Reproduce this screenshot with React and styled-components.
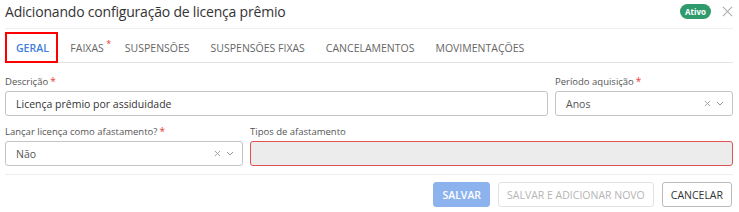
import React from "react";
import styled, { createGlobalStyle } from "styled-components";

const GlobalStyle = createGlobalStyle`
  body {
    margin: 0;
    font-family: "Open Sans", "Noto Sans", sans-serif;
    background: #fff;
    color: #333;
  }
`;

const Modal = styled.div`
  width: 739px;
  height: 212px;
  padding: 0 6px 0 5px;
  box-sizing: border-box;
`;

const Header = styled.div`
  height: 28px;
  display: flex;
  align-items: center;
  justify-content: space-between;
`;

const Title = styled.h1`
  margin: 0;
  font-size: 14px;
  font-weight: 400;
  color: #333;
  letter-spacing: -0.2px;
  padding-bottom: 5px;
`;

const HeaderRight = styled.div`
  display: flex;
  align-items: center;
  gap: 11px;
  padding-bottom: 5px;
`;

const Badge = styled.span`
  background: #2f9a6c;
  color: #fff;
  font-size: 8px;
  font-weight: 700;
  border-radius: 8px;
  padding: 2px 5px;
  line-height: 11px;
`;

const Close = styled.svg`
  width: 11px;
  height: 11px;
`;

const Tabs = styled.nav`
  display: flex;
  align-items: stretch;
  height: 35px;
  border-top: 1px solid #eee;
  border-bottom: 1px solid #e3e3e3;
  box-sizing: border-box;
  padding-top: 3px;
`;

const Tab = styled.div`
  position: relative;
  display: flex;
  align-items: center;
  padding: ${({ $active }) => ($active ? "1px 7px 0 9px" : "1px 10.5px 0")};
  margin-right: ${({ $active }) => ($active ? "2px" : "0")};
  margin-bottom: ${({ $active }) => ($active ? "-1px" : "0")};
  font-size: 10.5px;
  color: ${({ $active }) => ($active ? "#3d7fdb" : "#666")};
  font-weight: ${({ $active }) => ($active ? 600 : 400)};
  border: ${({ $active }) => ($active ? "2px solid #f00" : "none")};
  box-sizing: border-box;
  white-space: nowrap;
`;

const Req = styled.span`
  color: #e53935;
  font-size: 10px;
  margin-left: 2px;
`;

const TabReq = styled.span`
  position: absolute;
  right: 3px;
  top: 5px;
  color: #e53935;
  font-size: 9px;
`;

const Form = styled.div`
  display: grid;
  grid-template-columns: 1fr 178px;
  column-gap: 7px;
  padding-top: 11px;
`;

const Row2 = styled.div`
  display: grid;
  grid-template-columns: 238px 1fr;
  column-gap: 7px;
  padding-top: 8px;
`;

const Field = styled.div`
  display: flex;
  flex-direction: column;
`;

const Label = styled.label`
  font-size: 9.5px;
  color: #555;
  height: 17px;
  line-height: 15px;
`;

const Box = styled.div`
  height: 25px;
  box-sizing: border-box;
  border: 1px solid ${({ $error }) => ($error ? "#e05252" : "#c4c4c4")};
  background: ${({ $disabled }) => ($disabled ? "#ececec" : "#fff")};
  border-radius: 3px;
  display: flex;
  align-items: center;
  padding: 0 8px 0 10px;
  font-size: 10.5px;
  color: #333;
`;

const Value = styled.span`
  flex: 1;
  color: ${({ $muted }) => ($muted ? "#555" : "#333")};
`;

const Icons = styled.span`
  display: flex;
  align-items: center;
  gap: 5px;
`;

const Divider = styled.div`
  border-top: 1px solid #eee;
  margin-top: 8px;
`;

const Footer = styled.div`
  display: flex;
  justify-content: flex-end;
  gap: 8px;
  padding-top: 7px;
  padding-right: 1px;
`;

const Button = styled.button`
  height: 25px;
  box-sizing: border-box;
  border-radius: 3px;
  font-family: inherit;
  font-size: 10.5px;
  padding: 0 8px;
  background: ${({ $primary }) => ($primary ? "#8cb3ee" : "#fff")};
  color: ${({ $primary, $disabled }) => ($primary ? "#fff" : $disabled ? "#b5b5b5" : "#333")};
  font-weight: ${({ $primary }) => ($primary ? 600 : 400)};
  border: 1px solid ${({ $primary, $disabled }) => ($primary ? "#8cb3ee" : $disabled ? "#e2e2e2" : "#bbb")};
`;

const XIcon = () => (
  <svg width="7" height="7" viewBox="0 0 8 8">
    <path d="M1 1L7 7M7 1L1 7" stroke="#999" strokeWidth="1" />
  </svg>
);

const Chevron = () => (
  <svg width="8" height="5" viewBox="0 0 8 5">
    <path d="M1 1L4 4L7 1" stroke="#999" strokeWidth="1" fill="none" />
  </svg>
);

const SelectIcons = () => (
  <Icons>
    <XIcon />
    <Chevron />
  </Icons>
);

const tabs = ["SUSPENSÕES", "SUSPENSÕES FIXAS", "CANCELAMENTOS", "MOVIMENTAÇÕES"];

export default function App() {
  return (
    <Modal>
      <GlobalStyle />
      <Header>
        <Title>Adicionando configuração de licença prêmio</Title>
        <HeaderRight>
          <Badge>Ativo</Badge>
          <Close viewBox="0 0 12 12">
            <path d="M1 1L11 11M11 1L1 11" stroke="#b0b0b0" strokeWidth="1.3" />
          </Close>
        </HeaderRight>
      </Header>

      <Tabs>
        <Tab $active>GERAL</Tab>
        <Tab>
          FAIXAS
          <TabReq>*</TabReq>
        </Tab>
        {tabs.map((t) => (
          <Tab key={t}>{t}</Tab>
        ))}
      </Tabs>

      <Form>
        <Field>
          <Label>
            Descrição<Req>*</Req>
          </Label>
          <Box>
            <Value>Licença prêmio por assiduidade</Value>
          </Box>
        </Field>
        <Field>
          <Label>
            Período aquisição<Req>*</Req>
          </Label>
          <Box>
            <Value $muted>Anos</Value>
            <SelectIcons />
          </Box>
        </Field>
      </Form>

      <Row2>
        <Field>
          <Label>
            Lançar licença como afastamento?<Req>*</Req>
          </Label>
          <Box>
            <Value $muted>Não</Value>
            <SelectIcons />
          </Box>
        </Field>
        <Field>
          <Label>Tipos de afastamento</Label>
          <Box $error $disabled />
        </Field>
      </Row2>

      <Divider />

      <Footer>
        <Button $primary>SALVAR</Button>
        <Button $disabled>SALVAR E ADICIONAR NOVO</Button>
        <Button>CANCELAR</Button>
      </Footer>
    </Modal>
  );
}
